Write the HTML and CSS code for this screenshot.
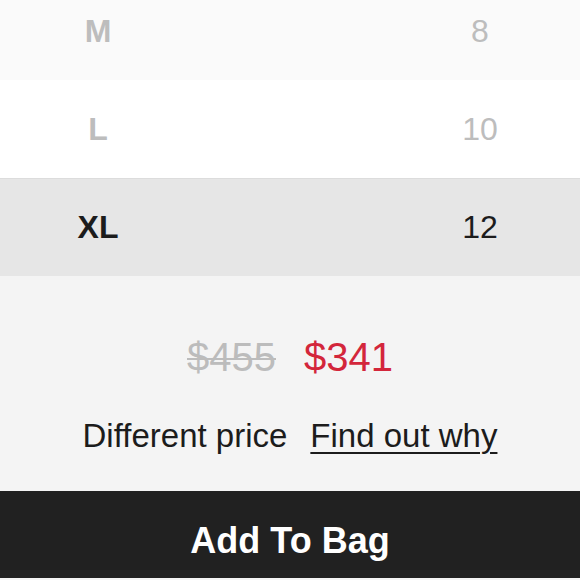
FILE: index.html
```html
<!DOCTYPE html>
<html lang="en">
<head>
    <meta charset="UTF-8">
    <meta name="viewport" content="width=device-width, initial-scale=1.0">
    <title>Size</title>
    <link rel="stylesheet" href="styles.css">
</head>
<body>
    <ul class="size_list">
        <li class="size_row off">
            <span class="size_name">M</span>
            <span class="size_num">8</span>
        </li>
        <li class="size_row off white">
            <span class="size_name">L</span>
            <span class="size_num">10</span>
        </li>
        <li class="size_row picked">
            <span class="size_name">XL</span>
            <span class="size_num">12</span>
        </li>
    </ul>
    <div class="price_box">
        <div class="prices">
            <span class="old_price">$455</span>
            <span class="new_price">$341</span>
        </div>
        <div class="price_note">
            <span>Different price</span>
            <a href="#" class="why">Find out why</a>
        </div>
    </div>
    <button class="bag_btn">Add To Bag</button>
</body>
</html>
```

FILE: styles.css
```css
*{margin:0; padding:0; box-sizing: border-box;}
body{
    background-color: #f4f4f4;
    color: #1c1c1c;
    font-family: "Liberation Sans", Arial, sans-serif;
    width: 580px;
    height: 580px;
    overflow: hidden;
}
li{list-style: none;}

.size_list{
    margin-top: -18px;
}
.size_row{
    display: flex;
    align-items: center;
    height: 98px;
    background-color: #fafafa;
    font-size: 32px;
}
.size_row.white{
    background-color: #ffffff;
}
.size_row.picked{
    background-color: #e6e6e6;
    border-top: 1px solid #dcdcdc;
}
.size_name{
    width: 196px;
    text-align: center;
    font-weight: bold;
}
.size_num{
    margin-left: auto;
    width: 200px;
    text-align: center;
}
.off{
    color: #bdbdbd;
}

.price_box{
    height: 215px;
    display: flex;
    flex-direction: column;
    align-items: center;
    padding-top: 59px;
}
.prices{
    display: flex;
    gap: 28px;
    font-size: 40px;
}
.old_price{
    color: #bcbcbc;
    text-decoration: line-through;
    text-decoration-thickness: 2px;
}
.new_price{
    color: #d3263b;
}
.price_note{
    display: flex;
    gap: 23px;
    margin-top: 37px;
    font-size: 33px;
}
.why{
    color: #1c1c1c;
    text-decoration: underline;
    text-decoration-thickness: 2px;
    text-underline-offset: 5px;
}

.bag_btn{
    display: block;
    width: 100%;
    height: 87px;
    padding-top: 12px;
    border: none;
    background-color: #212121;
    color: #ffffff;
    font-family: "Liberation Sans", Arial, sans-serif;
    font-size: 36px;
    font-weight: bold;
    cursor: pointer;
}
```
